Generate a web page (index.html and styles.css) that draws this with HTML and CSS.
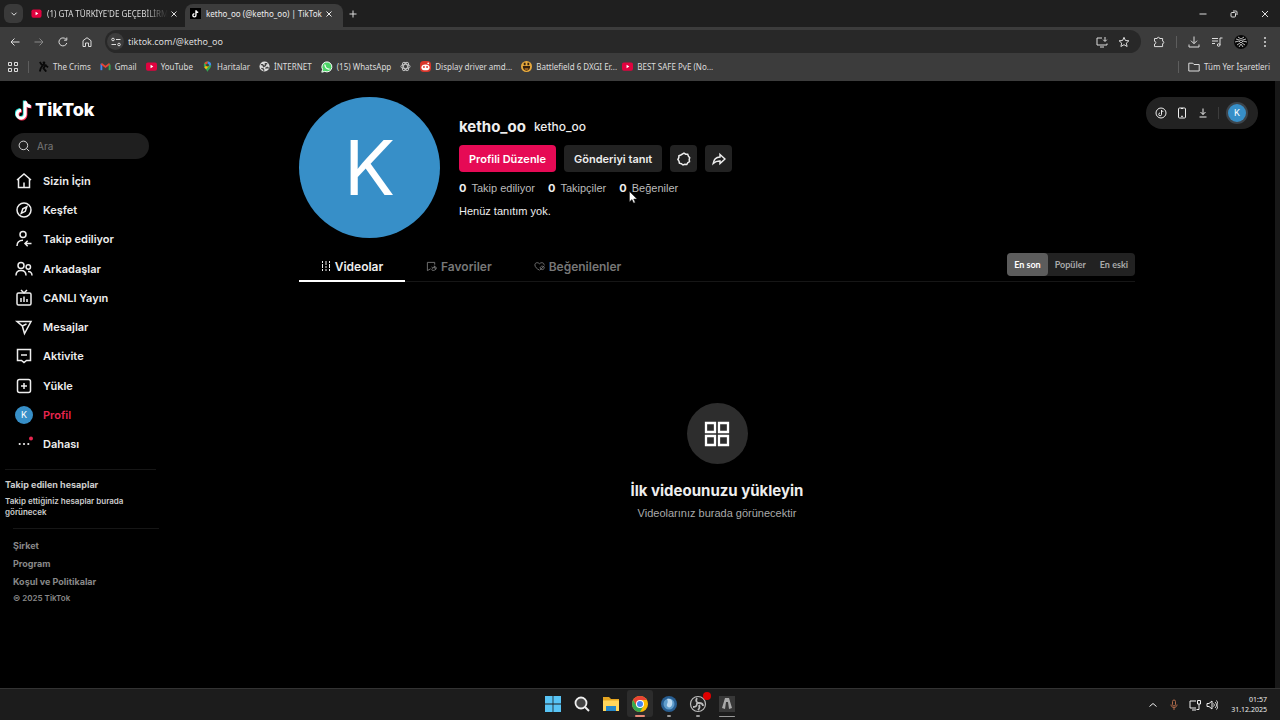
FILE: index.html
```html
<!DOCTYPE html>
<html lang="tr">
<head>
<meta charset="utf-8">
<meta name="viewport" content="width=device-width, initial-scale=1">
<title>ketho_oo (@ketho_oo) | TikTok</title>
<link rel="stylesheet" href="styles.css">
</head>
<body>
<header class="browser">
  <div class="tabstrip">
    <button class="tab-search" aria-label="Sekme ara"><svg class="i8" viewBox="0 0 8 8"><path d="M1.5 2.7 4 5.2 6.500 2.700"/></svg></button>
    <div class="btab">
      <svg class="fav" viewBox="0 0 12 12"><rect class="yt" x="0.500" y="1.500" width="11" height="9" rx="2"/><path class="w" d="M5 4.200 8 6 5 7.800z"/></svg>
      <span class="btab-title fade">(1) GTA TÜRKİYE'DE GEÇEBİLİRM</span>
      <button class="close" aria-label="Kapat"><svg class="i8" viewBox="0 0 8 8"><path d="M1.500 1.500l5 5M6.500 1.500l-5 5"/></svg></button>
    </div>
    <div class="btab active">
      <svg class="fav" viewBox="0 0 12 12"><rect fill="#000" width="12" height="12"/><path class="ws" d="M6.500 2.500V8A1.700 1.700 0 1 1 4.800 6.300M6.500 2.500C6.700 4 7.700 4.700 9 4.800"/></svg>
      <span class="btab-title">ketho_oo (@ketho_oo) | TikTok</span>
      <button class="close" aria-label="Kapat"><svg class="i8" viewBox="0 0 8 8"><path d="M1.500 1.500l5 5M6.500 1.500l-5 5"/></svg></button>
    </div>
    <button class="newtab" aria-label="Yeni sekme"><svg class="i8" viewBox="0 0 8 8"><path d="M4 .5v7M.5 4h7"/></svg></button>
    <div class="window-controls">
      <button aria-label="Simge durumuna küçült"><svg class="i8" viewBox="0 0 8 8"><path d="M.5 4h7"/></svg></button>
      <button aria-label="Aşağı geri getir"><svg class="i8" viewBox="0 0 8 8"><rect x="1" y="2.500" width="4.500" height="4.500" rx="1"/><path d="M3 1h3a1 1 0 0 1 1 1v3"/></svg></button>
      <button aria-label="Pencereyi kapat"><svg class="i8" viewBox="0 0 8 8"><path d="M1 1l6 6M7 1 1 7"/></svg></button>
    </div>
  </div>
  <div class="toolbar">
    <div class="nav-buttons">
      <button aria-label="Geri"><svg class="i12" viewBox="0 0 12 12"><path d="M10.500 6H2M5.500 2.500 2 6l3.500 3.500"/></svg></button>
      <button class="dim" aria-label="İleri"><svg class="i12" viewBox="0 0 12 12"><path d="M1.500 6H10M6.500 2.500 10 6 6.500 9.500"/></svg></button>
      <button aria-label="Yenile"><svg class="i12" viewBox="0 0 12 12"><path d="M9.800 7A4 4 0 1 1 9 3.300M9.800 1.500v2.700H7.100"/></svg></button>
      <button aria-label="Ana sayfa"><svg class="i12" viewBox="0 0 12 12"><path d="M2 10.500V4.700L6 1.700l4 3v5.800H7.500V7h-3v3.500z"/></svg></button>
    </div>
    <div class="omnibox">
      <button class="site-info" aria-label="Site bilgileri"><svg class="i12" viewBox="0 0 12 12"><circle cx="3" cy="3.500" r="1.300"/><path d="M6 3.500h4.500M1.500 8.500H6"/><circle cx="9" cy="8.500" r="1.300"/></svg></button>
      <input class="url" aria-label="Adres" value="tiktok.com/@ketho_oo">
      <button aria-label="Uygulamayı yükle"><svg class="i12" viewBox="0 0 12 12"><path d="M6 2H1v7h10V7.500M4 11h4M9 1v4M7.200 3.700 9 5.500l1.800-1.800"/></svg></button>
      <button aria-label="Yer işareti ekle"><svg class="i12" viewBox="0 0 12 12"><path d="M6 1.300 7.400 4.500l3.500.3-2.600 2.300.8 3.400L6 8.700l-3.100 1.800.8-3.400L1.100 4.800l3.500-.3z"/></svg></button>
    </div>
    <div class="toolbar-end">
      <button aria-label="Uzantılar"><svg class="i12" viewBox="0 0 12 12"><path d="M1.500 2.500h2.700a1.200 1.200 0 0 1 2.400 0h3v2.700a1.200 1.200 0 0 1 0 2.400v3H1.500V8a1.300 1.300 0 0 0 0-2.700z"/></svg></button>
      <i class="bar"></i>
      <button aria-label="İndirilenler"><svg class="i12" viewBox="0 0 12 12"><path d="M6 .5v7M3 4.700l3 3 3-3M1 8.500V11h10V8.500"/></svg></button>
      <button aria-label="Medya"><svg class="i12" viewBox="0 0 12 12"><path d="M1 2.500h6M1 5h6M1 7.500h3M9 9V2h2.500"/><circle cx="7.700" cy="9" r="1.300"/></svg></button>
      <button aria-label="Chrome profili"><svg class="i14" viewBox="0 0 14 14"><circle class="blk" cx="7" cy="7" r="7"/><path class="mask" d="M2 4l5 1.500L12 4M1 7l4-1 2 2 2-2 4 1M3 10l3-2M11 10 8 8M5 12l2-3 2 3M4 2l3 2 3-2"/></svg></button>
      <button aria-label="Diğer"><svg class="i12 dots" viewBox="0 0 12 12"><circle cx="6" cy="2" r="1"/><circle cx="6" cy="6" r="1"/><circle cx="6" cy="10" r="1"/></svg></button>
    </div>
  </div>
  <nav class="bookmarks" aria-label="Yer işaretleri">
    <button aria-label="Uygulamalar"><svg class="i12" viewBox="0 0 12 12"><path d="M1.500 1.500h3v3h-3zM7.500 1.500h3v3h-3zM1.500 7.500h3v3h-3zM7.500 7.500h3v3h-3z"/></svg></button>
    <i class="bar"></i>
    <a class="bm" href="#"><svg class="i11" viewBox="0 0 12 12"><circle class="blk" cx="6.500" cy="2" r="1.500"/><path class="crim" d="M2 1l2 3 4 .5L6 8l3 3.500M5 5 3 8l-1 3.500M8 4.500 11 7"/></svg>The Crims</a>
    <a class="bm" href="#"><svg class="i11 thick" viewBox="0 0 12 12"><path stroke="#4285f4" d="M1.500 10V3"/><path stroke="#ea4335" d="m1.500 3 4.500 3.500L10.500 3"/><path stroke="#34a853" d="M10.500 10V4"/></svg>Gmail</a>
    <a class="bm" href="#"><svg class="i11" viewBox="0 0 12 12"><rect class="yt" y="1.500" width="12" height="9" rx="2"/><path class="w" d="M5 4.200 8 6 5 7.800z"/></svg>YouTube</a>
    <a class="bm" href="#"><svg class="i11 fill" viewBox="0 0 12 12"><path fill="#34a853" d="M2 4.500a4 4 0 0 1 8 0C10 8 7 8.500 6 12 5 8.500 2 8 2 4.500z"/><path fill="#4285f4" d="M6 .5a4 4 0 0 1 4 4L7 5z"/><path fill="#ea4335" d="M6 .5a4 4 0 0 0-3.500 2L5 4l1.500-3.500z"/><path fill="#fbbc04" d="M2.500 7 6 3.500 8 5 4.500 9z"/><circle cx="6" cy="4.500" r="1.500" fill="#3c3c3c"/></svg>Haritalar</a>
    <a class="bm" href="#"><svg class="i11" viewBox="0 0 12 12"><circle class="light" cx="6" cy="6" r="5.500"/><path class="land" d="M2 4h2l1 2 2-1V3h2M2.500 8l2 .5 1 2M7 8l2-1 1.500 1"/></svg>İNTERNET</a>
    <a class="bm" href="#"><svg class="i12" viewBox="0 0 12 12"><path fill="#4bd366" stroke="#fff" d="M.8 11.200 1.600 8.500A5 5 0 1 1 3.700 10.400z"/><path stroke="#fff" stroke-width="1.300" d="M4 3.500C3.500 6 6 8.500 8.500 8"/></svg>(15) WhatsApp</a>
    <a class="bm" href="#" aria-label="ChatGPT"><svg class="i11" viewBox="0 0 12 12"><g class="knot"><ellipse cx="6" cy="6" rx="5" ry="2.300"/><ellipse cx="6" cy="6" rx="5" ry="2.300" transform="rotate(60 6 6)"/><ellipse cx="6" cy="6" rx="5" ry="2.300" transform="rotate(120 6 6)"/></g></svg></a>
    <a class="bm wide" href="#"><svg class="i11 fill" viewBox="0 0 12 12"><rect width="12" height="12" rx="4" fill="#d9362b"/><ellipse cx="6" cy="7" rx="4.500" ry="3.200" fill="#fff"/><circle cx="9" cy="2.500" r="1" fill="#fff"/><circle cx="4.300" cy="6.500" r="1" fill="#d9362b"/><circle cx="7.700" cy="6.500" r="1" fill="#d9362b"/></svg>Display driver amd...</a>
    <a class="bm wide" href="#"><svg class="i11 fill" viewBox="0 0 12 12"><circle cx="6" cy="6" r="6" fill="#e8aa3d"/><path fill="#33200f" d="M2 5.500h8C10 9 8.500 10.500 6 10.500S2 9 2 5.500zM3 2h2v2.500H3zM7 2h2v2.500H7z"/><path fill="#c27a24" d="M4 8h4v1.500H4z"/></svg>Battlefield 6 DXGI Er...</a>
    <a class="bm" href="#"><svg class="i11" viewBox="0 0 12 12"><rect class="yt" y="1.500" width="12" height="9" rx="2"/><path class="w" d="M5 4.200 8 6 5 7.800z"/></svg>BEST SAFE PvE (No...</a>
    <div class="bm-end">
      <i class="bar"></i>
      <a class="bm" href="#"><svg class="i12" viewBox="0 0 12 12"><path d="M.8 2.200h4l1.200 1.300h5.200v6.500H.8z"/></svg>Tüm Yer İşaretleri</a>
    </div>
  </nav>
</header>

<div class="page">
  <aside class="sidebar">
    <a class="logo" href="#" aria-label="TikTok">
      <svg class="logo-note" viewBox="0 0 18 22"><g class="note"><path stroke="#25d8d2" d="M9.300 1.500V14.500A4 4 0 1 1 5.300 10.500M9.300 1.500C9.800 4.500 12 6.500 15 6.700"/><path stroke="#fe2c55" d="M10.900 3V16A4 4 0 1 1 6.900 12M10.900 3C11.400 6 13.600 7.800 16.600 8"/><path stroke="#fff" d="M10.100 2.200V15.200A4 4 0 1 1 6.100 11.200M10.100 2.200C10.600 5.200 12.800 7.200 15.800 7.400"/></g></svg>
      <span>TikTok</span>
    </a>
    <label class="search">
      <svg class="i12" viewBox="0 0 14 14"><circle cx="6.300" cy="6.300" r="5"/><path d="m10 10 3 3"/></svg>
      <input type="search" placeholder="Ara" aria-label="Ara">
    </label>
    <nav class="menu">
      <a href="#"><svg viewBox="0 0 18 18"><path d="M2 8 9 2l7 6M3.500 7v8.500h11V7M9 10.500v5"/></svg>Sizin İçin</a>
      <a href="#"><svg viewBox="0 0 18 18"><circle cx="9" cy="9" r="7"/><path d="m11.800 5.800-1.500 4.500-4 2 1.500-4.500z"/></svg>Keşfet</a>
      <a href="#"><svg viewBox="0 0 18 18"><circle cx="8" cy="4.500" r="3"/><path d="M2 16c0-4 2.500-5.800 6-5.800M16.500 13.500H10M12.700 10.700 10 13.500l2.700 2.700"/></svg>Takip ediliyor</a>
      <a href="#"><svg viewBox="0 0 18 18"><circle cx="6" cy="5.500" r="3"/><path d="M1 15.500c0-3.500 2-5 5-5s5 1.500 5 5"/><circle cx="13.300" cy="7" r="2.200"/><path d="M13 11.500c2.500-.2 4 1.300 4 4"/></svg>Arkadaşlar</a>
      <a href="#"><svg viewBox="0 0 18 18"><rect x="2" y="4" width="14" height="12" rx="1.500"/><path d="m6 1 3 3 3-3M6 9v4M9 7.500V13M12 10v3"/></svg>CANLI Yayın</a>
      <a href="#"><svg viewBox="0 0 18 18"><path d="M2 3.500h14L9.500 15.500 7.300 8zM7.300 8l4.200-2"/></svg>Mesajlar</a>
      <a href="#"><svg viewBox="0 0 18 18"><path d="M2.500 2.500h13v11h-4L9 15.500l-2.500-2h-4zM6 8h6"/></svg>Aktivite</a>
      <a href="#"><svg viewBox="0 0 18 18"><rect x="2.500" y="2.500" width="13" height="13" rx="2"/><path d="M9 6v6M6 9h6"/></svg>Yükle</a>
      <a class="current" href="#"><span class="avatar small">K</span>Profil</a>
      <a href="#"><svg class="dots" viewBox="0 0 18 18"><circle cx="4.700" cy="9" r="1.100"/><circle cx="9" cy="9" r="1.100"/><circle cx="13.300" cy="9" r="1.100"/><circle class="red" cx="16" cy="3.500" r="2"/></svg>Dahası</a>
    </nav>
    <section class="following">
      <h2>Takip edilen hesaplar</h2>
      <p>Takip ettiğiniz hesaplar burada görünecek</p>
    </section>
    <footer class="links">
      <a href="#">Şirket</a>
      <a href="#">Program</a>
      <a href="#">Koşul ve Politikalar</a>
      <small>© 2025 TikTok</small>
    </footer>
  </aside>

  <main class="content">
    <section class="profile">
      <div class="avatar large">K</div>
      <div class="info">
        <div class="names"><h1>ketho_oo</h1><h2>ketho_oo</h2></div>
        <div class="actions">
          <button class="primary">Profili Düzenle</button>
          <button>Gönderiyi tanıt</button>
          <button class="square" aria-label="Ayarlar"><svg class="i14" viewBox="0 0 14 14"><path d="m7 1.200 1.700 1 2 .1.700 1.900 1.300 1.500-.5 1.900.3 2-1.700 1.100-1 1.700-2-.1-1.800.7-1.600-1.300-2-.5-.4-2L.900 7.500l.9-1.800.1-2 1.900-.7z"/></svg></button>
          <button class="square" aria-label="Paylaş"><svg class="i14" viewBox="0 0 14 14"><path d="M8 2.500 13 7l-5 4.500V9C5 8.800 3 9.800 1.200 11.500 1.700 7.500 4 5.200 8 5z"/></svg></button>
        </div>
        <div class="stats">
          <span><b>0</b>Takip ediliyor</span><span><b>0</b>Takipçiler</span><span><b>0</b>Beğeniler</span>
        </div>
        <p class="bio">Henüz tanıtım yok.</p>
      </div>
    </section>
    <div class="tabs">
      <div class="tablist" role="tablist">
        <button class="tab selected" role="tab" aria-selected="true"><svg class="i10" viewBox="0 0 10 10"><path d="M1.500 0v2M1.500 3v4M1.500 8v2M5 0v4M5 5v2M5 8v2M8.500 0v2M8.500 3v4M8.500 8v2"/></svg>Videolar</button>
        <button class="tab" role="tab" aria-selected="false"><svg class="i11" viewBox="0 0 12 12"><path d="M9.500 4V1.500h-8V10.500L5 8.500M6 6.500c2 2 3.500-2 5 .5S7.500 11 6.500 10 9 5.500 10 8M9 5l1.500 4.500"/></svg>Favoriler</button>
        <button class="tab" role="tab" aria-selected="false"><svg class="i11" viewBox="0 0 12 12"><path d="M6 10C3 8.500 1 6.500 1 4.200 1 1.800 4 1 6 3c2-2 5-1.200 5 1.200M6.500 7.500c1.500-2.500 3.500-2.500 5 0-1.500 2.500-3.500 2.500-5 0zM6.500 10l5-5"/></svg>Beğenilenler</button>
      </div>
      <div class="sort">
        <button class="on">En son</button><button>Popüler</button><button>En eski</button>
      </div>
    </div>
    <section class="empty">
      <div class="empty-icon"><svg viewBox="0 0 26 26"><path d="M2 2h9v9H2zM15 2h9v9h-9zM2 15h9v9H2zM15 15h9v9h-9z"/></svg></div>
      <h2>İlk videounuzu yükleyin</h2>
      <p>Videolarınız burada görünecektir</p>
    </section>
  </main>

  <div class="floating">
    <button aria-label="Jeton al"><svg class="i12" viewBox="0 0 12 12"><circle cx="6" cy="6" r="5"/><path d="M6.500 3v4.500A1.400 1.400 0 1 1 5 6M6.500 3c.2 1 .8 1.500 1.800 1.500"/></svg></button>
    <button aria-label="Uygulamayı edinin"><svg class="i12" viewBox="0 0 12 12"><rect x="2.500" y="1" width="7" height="10" rx="1"/><path d="M5 1.500h2M5 9.300h2"/></svg></button>
    <button aria-label="Masaüstü uygulaması"><svg class="i12" viewBox="0 0 12 12"><path d="M6 1.500v6M3.500 5 6 7.500 8.500 5M2.500 10h7"/></svg></button>
    <i class="bar"></i>
    <button class="avatar small ring" aria-label="Profil">K</button>
  </div>
  <div class="scrollbar"></div>
  <svg class="cursor" viewBox="0 0 9 13"><path d="M.5.5v10.200L3 8.500l1.600 3.600 1.600-.7L4.700 8H8z"/></svg>
</div>

<footer class="taskbar">
  <div class="apps">
    <button aria-label="Başlat"><svg viewBox="0 0 18 18"><path fill="#58c4f5" d="M1 1h7.600v7.600H1zM9.400 1H17v7.600H9.400zM1 9.400h7.600V17H1zM9.400 9.400H17V17H9.400z"/></svg></button>
    <button aria-label="Ara"><svg viewBox="0 0 18 18"><circle cx="8" cy="8" r="5.500" fill="#444" stroke="#eee" stroke-width="1.800"/><path stroke="#eee" stroke-width="2" d="m12 12 4 4"/></svg></button>
    <button aria-label="Dosya Gezgini"><svg viewBox="0 0 18 18"><path fill="#e5a520" d="M1 2h6l2 2h8v12H1z"/><path fill="#ffd65c" d="M1 5.500h16V16H1z"/><path fill="#2487c9" d="M4 16v-5h10v5z"/></svg></button>
    <button class="open" aria-label="Chrome"><svg viewBox="0 0 18 18"><circle cx="9" cy="9" r="8" fill="#fbbc04"/><path fill="#ea4335" d="M2.100 5A8 8 0 0 1 15.900 5H9L5.500 11z"/><path fill="#34a853" d="M2.100 5A8 8 0 0 0 9 17l3.500-6H5.500z"/><circle cx="9" cy="9" r="4" fill="#fff"/><circle cx="9" cy="9" r="3" fill="#4285f4"/></svg></button>
    <button class="running" aria-label="Tarayıcı"><svg viewBox="0 0 18 18"><circle cx="9" cy="9" r="8" fill="#285e91"/><circle cx="9" cy="9" r="5.500" fill="#5f9dcc"/><path fill="#bddaf0" d="M7 4c5-1 6 3 5 6s-4 3-5 1 2-3 0-7z"/></svg></button>
    <button class="running" aria-label="OBS Studio"><svg viewBox="0 0 18 18"><circle cx="9" cy="9" r="7.500" fill="#222" stroke="#bbb" stroke-width="1.200"/><path stroke="#bbb" stroke-width="1.800" fill="none" d="M8 3c-2 3 0 5 2 5s4 1 4 3M4 12c4 0 4-2 4-4M9 15c2-2 2-3 1-5"/></svg><i class="badge"></i></button>
    <button class="running long" aria-label="Oyun"><svg viewBox="0 0 18 18"><rect x="1" y="1" width="16" height="16" fill="#383838"/><path fill="#aaa" d="M7 3h4l3 10-3 1-1-7H8l-1 7-3-1z"/></svg></button>
  </div>
  <div class="tray">
    <button aria-label="Gizli simgeler"><svg class="i12" viewBox="0 0 12 12"><path d="m2.500 7.500 3.500-3 3.500 3"/></svg></button>
    <button class="mic" aria-label="Mikrofon"><svg class="i12" viewBox="0 0 12 12"><rect x="4.500" y="1" width="3" height="6" rx="1.500"/><path d="M3 5.500c0 4 6 4 6 0M6 8.500V11"/></svg></button>
    <button aria-label="Ağ"><svg class="i12" viewBox="0 0 12 12"><path d="M7 2H1v7h6M3 11h4M8.500 1.500h3v3.500h-3zM10 5v5.500H7.500"/></svg></button>
    <button aria-label="Ses"><svg class="i12" viewBox="0 0 12 12"><path d="M1 4.500v3h2L6 10V2L3 4.500zM7.500 4.500c1 1 1 2 0 3M9 3c2 2 2 4 0 6M10.500 1.500c2 3 2 6 0 9"/></svg></button>
    <time class="clock"><span>01:57</span><span>31.12.2025</span></time>
  </div>
</footer>
</body>
</html>
```
FILE: styles.css
```css
* { box-sizing: border-box; }
body {
  margin: 0;
  min-height: 100vh;
  display: flex;
  flex-direction: column;
  background: #000;
  color: #eee;
  font-family: Inter, "Liberation Sans", sans-serif;
  overflow: hidden;
}
h1, h2, p { margin: 0; }
a { color: inherit; text-decoration: none; }
button {
  display: flex;
  align-items: center;
  justify-content: center;
  padding: 0;
  border: 0;
  background: none;
  color: inherit;
  font: inherit;
}
input { min-width: 0; padding: 0; border: 0; outline: 0; background: none; color: inherit; font: inherit; }
svg { display: block; flex: none; fill: none; stroke: currentColor; }
.i8 { width: 8px; height: 8px; }
.i10 { width: 10px; height: 10px; }
.i11 { width: 11px; height: 11px; }
.i12 { width: 12px; height: 12px; }
.i14 { width: 14px; height: 14px; }
.dots { fill: currentColor; stroke: none; }
.fill { stroke: none; }
.thick { stroke-width: 2; }
.yt { fill: #e0033f; stroke: none; }
.w { fill: #fff; stroke: none; }
.ws { stroke: #fff; stroke-width: 1.5; }
.blk { fill: #080808; stroke: none; }
.crim { stroke: #080808; stroke-width: 2; }
.mask { stroke: #b8b8b8; }
.light { fill: #ddd; stroke: none; }
.land { stroke: #444; stroke-width: 1.5; }
.knot { stroke: #c8c8c8; }
.red { fill: #e8264f; }
.bar { flex: none; width: 1px; height: 12px; background: #5d5d5d; }

/* Browser chrome */
.browser { background: #3c3c3c; color: #ddd; font-family: "Noto Sans", sans-serif; font-size: 8px; line-height: 12px; }
.tabstrip { display: flex; align-items: center; height: 27px; padding-left: 4px; background: #1f1f1f; }
.tab-search { width: 19px; height: 19px; border-radius: 6px; background: #3a3a3a; }
.btab { display: flex; align-items: center; width: 162px; height: 23px; margin-top: 4px; padding: 0 10px 4px 8px; border-radius: 8px 8px 0 0; }
.btab.active { width: 158px; background: #3c3c3c; color: #eee; padding-left: 5px; }
.fav { width: 11px; height: 11px; stroke: none; }
.btab-title { flex: 1; margin: 0 2px 0 5px; white-space: nowrap; }
.fade { mask-image: linear-gradient(to right, #000 80%, transparent); }
.close { margin-left: auto; }
.newtab { width: 20px; height: 24px; }
.window-controls { display: flex; margin-left: auto; }
.window-controls button { width: 31px; height: 27px; }
.toolbar { display: flex; align-items: center; gap: 12px; height: 27px; margin-top: 1px; padding: 0 9px; }
.nav-buttons { display: flex; gap: 12px; }
.dim { color: #888; }
.omnibox { display: flex; flex: 1; align-items: center; gap: 10px; height: 23px; padding: 0 11px 0 2px; border-radius: 12px; background: #282828; }
.site-info { width: 17px; height: 17px; border-radius: 50%; background: #3c3c3c; }
.url { flex: 1; margin-left: -6px; font-size: 9px; }
.toolbar-end { display: flex; align-items: center; gap: 11px; }
.bookmarks { display: flex; align-items: center; gap: 9px; height: 26px; padding: 0 10px 3px 7px; white-space: nowrap; }
.bm { display: flex; align-items: center; gap: 4px; }
.wide { width: 92px; }
.bm-end { display: flex; align-items: center; gap: 9px; margin-left: auto; }

/* Page */
.page { position: relative; display: flex; flex: 1; }
.sidebar { width: 159px; padding: 16px 0 0; font-weight: 600; }
.logo { display: flex; align-items: center; gap: 2px; height: 26px; margin-left: 15px; color: #fff; font-size: 18px; font-weight: 800; line-height: 26px; }
.logo-note { width: 18px; height: 22px; }
.note { stroke-width: 3; }
.search { display: flex; align-items: center; gap: 7px; height: 26px; margin: 10px 10px 7px 11px; padding: 0 7px; border-radius: 13px; background: #1f1f1f; font-size: 10px; font-weight: 400; }
.search input { width: 80px; }
.search input::placeholder { color: #777; opacity: 1; }
.menu { display: grid; grid-auto-rows: 1fr; height: 293px; margin-left: 15px; font-size: 11px; }
.menu a { display: flex; align-items: center; gap: 10px; }
.menu svg { width: 18px; height: 18px; stroke-width: 1.5; overflow: visible; }
.current { color: #e8264f; }
.avatar { display: grid; place-items: center; flex: none; border-radius: 50%; background: #378fc8; color: #fff; font-weight: 400; }
.small { width: 18px; height: 18px; font-size: 9px; line-height: 18px; }
.large { width: 141px; height: 141px; font-size: 76px; line-height: 141px; }
.following { margin: 10px 3px 0 5px; padding: 9px 0 10px; border-top: 1px solid #161616; color: #ccc; font-size: 8px; line-height: 11px; }
.following h2 { margin-bottom: 5px; font-size: 9px; line-height: 12px; font-weight: 700; }
.following p { max-width: 130px; }
.links { display: flex; flex-direction: column; margin-left: 13px; padding-top: 8px; border-top: 1px solid #161616; color: #888; font-size: 9px; font-weight: 700; line-height: 18px; }
.links small { font-size: 8px; font-weight: 600; line-height: 14px; }

.content { flex: 1; padding: 16px 140px 0; }
.profile { display: flex; gap: 19px; }
.info { padding-top: 20px; }
.names { display: flex; align-items: center; gap: 8px; height: 20px; margin-bottom: 8px; }
.names h1 { font-size: 15px; font-weight: 700; line-height: 20px; }
.names h2 { font-size: 12px; font-weight: 500; line-height: 20px; }
.actions { display: flex; gap: 8px; font-size: 11px; font-weight: 600; }
.actions button { height: 27px; padding: 0 10px; border-radius: 4px; background: #222; }
.actions .primary { background: #e60a55; color: #fff; }
.actions .square { width: 27px; padding: 0; }
.actions svg { stroke-width: 1.5; }
.stats { display: flex; gap: 13px; margin-top: 8px; color: #bbb; font-family: "Liberation Sans", sans-serif; font-size: 11px; line-height: 16px; }
.stats b { margin-right: 5px; color: #eee; font-family: Inter, sans-serif; }
.bio { margin-top: 7px; font-family: "Liberation Sans", sans-serif; font-size: 11px; line-height: 16px; }
.tabs { display: flex; justify-content: space-between; align-items: flex-start; height: 44px; padding-top: 14px; border-bottom: 1px solid #161616; }
.tablist { display: flex; }
.tab { gap: 4px; height: 30px; min-width: 106px; padding: 0 21px; border-bottom: 2px solid transparent; color: #777; font-size: 12px; font-weight: 600; }
.tab svg { stroke-width: 1; }
.selected { border-color: #fff; color: #eee; }
.sort { display: flex; height: 23px; margin-top: 1px; border-radius: 4px; background: #222; color: #aaa; font-family: Lato, sans-serif; font-size: 9px; font-weight: 700; }
.sort button { padding: 0 7px; border-radius: 4px; }
.sort .on { background: #5c5c5c; color: #fff; }
.empty { display: flex; flex-direction: column; align-items: center; padding-top: 121px; }
.empty-icon { display: grid; place-items: center; width: 61px; height: 61px; border-radius: 50%; background: #2d2d2d; color: #fff; }
.empty-icon svg { width: 26px; height: 26px; stroke-width: 2.3; }
.empty h2 { margin-top: 17px; font-size: 15px; line-height: 20px; font-weight: 700; }
.empty p { margin-top: 4px; color: #aaa; font-family: "Liberation Sans", sans-serif; font-size: 11px; line-height: 16px; }

.floating { position: absolute; top: 16px; right: 22px; display: flex; align-items: center; gap: 9px; height: 32px; padding: 0 12px 0 9px; border-radius: 16px; background: #222; }
.floating .bar { background: #3c3c3c; }
.ring { box-shadow: 0 0 0 2px #3d454c; }
.scrollbar { width: 5px; background: #181818; }
.cursor { position: absolute; left: 629px; top: 110px; width: 9px; height: 13px; fill: #fff; stroke: #222; stroke-width: 0.5; }

/* Taskbar */
.taskbar { display: grid; grid-template-columns: 1fr auto 1fr; height: 32px; border-top: 1px solid #333; background: #1c1c1c; }
.apps { display: flex; grid-column: 2; gap: 3px; padding: 1px 0 3px; }
.apps button { position: relative; width: 26px; height: 27px; border-radius: 3px; }
.apps svg { width: 18px; height: 18px; stroke: none; }
.apps .open { background: #2c2c2c; }
.open::after, .running::after { content: ""; position: absolute; left: 11px; bottom: 0; width: 4px; height: 2px; border-radius: 1px; background: #999; }
.open::after { left: 8px; width: 10px; background: #e98b78; }
.long::after { left: 5px; width: 16px; height: 1px; }
.badge { position: absolute; top: 2px; right: 0; width: 8px; height: 8px; border-radius: 50%; background: #e00000; }
.tray { display: flex; align-items: center; justify-content: flex-end; gap: 5px; padding-right: 13px; }
.tray button { width: 12px; height: 20px; }
.tray .mic { margin: 0 4px; color: #b06a4a; }
.clock { display: flex; flex-direction: column; align-items: flex-end; margin-left: 8px; font-family: "Noto Sans", sans-serif; font-size: 7px; line-height: 10px; }
```
